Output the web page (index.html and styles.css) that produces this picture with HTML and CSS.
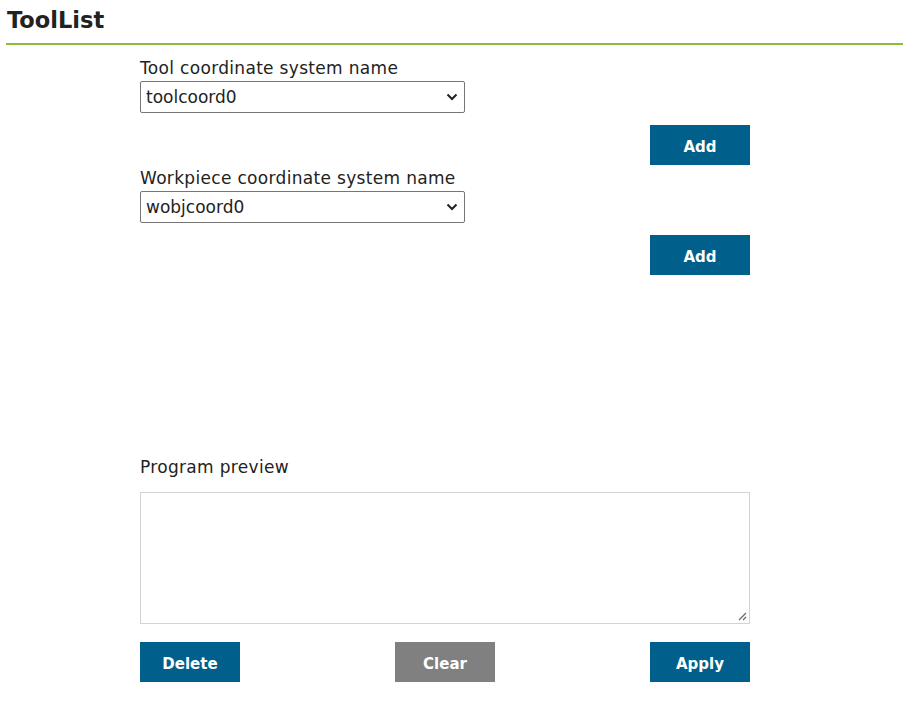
FILE: index.html
```html
<!DOCTYPE html>
<html>
<head>
<meta charset="utf-8">
<link rel="stylesheet" href="styles.css">
</head>
<body>
<div class="page">
  <h1 class="title">ToolList</h1>
  <div class="content">
    <div class="field">
      <label class="label">Tool coordinate system name</label>
      <div class="select">
        <span>toolcoord0</span>
        <svg class="chev" width="12" height="8" viewBox="0 0 12 8"><path d="M1.5 1.5 L6 6 L10.5 1.5" fill="none" stroke="#222" stroke-width="2"/></svg>
      </div>
    </div>
    <div class="btnrow"><button class="btn">Add</button></div>
    <div class="field second">
      <label class="label">Workpiece coordinate system name</label>
      <div class="select">
        <span>wobjcoord0</span>
        <svg class="chev" width="12" height="8" viewBox="0 0 12 8"><path d="M1.5 1.5 L6 6 L10.5 1.5" fill="none" stroke="#222" stroke-width="2"/></svg>
      </div>
    </div>
    <div class="btnrow"><button class="btn">Add</button></div>
    <div class="preview">
      <label class="label">Program preview</label>
      <div class="textarea">
        <svg class="grip" width="9" height="9" viewBox="0 0 9 9"><path d="M1 8 L8 1 M5 8 L8 5" stroke="#666" stroke-width="1.2"/></svg>
      </div>
    </div>
    <div class="actions">
      <button class="btn">Delete</button>
      <button class="btn gray">Clear</button>
      <button class="btn">Apply</button>
    </div>
  </div>
</div>
</body>
</html>
```
FILE: styles.css
```css
html, body { margin: 0; padding: 0; background: #fff; }
body { font-family: "DejaVu Sans", Verdana, sans-serif; color: #222; }
.page { padding: 6px 12px 0 6px; }
.title {
  margin: 0;
  padding: 0 0 8px 1px;
  font-size: 22.5px;
  font-weight: bold;
  line-height: 29px;
  color: #222;
  border-bottom: 2px solid #8dbb3a;
}
.content { width: 610px; margin-left: 134px; padding-top: 12px; }
.field { display: flex; flex-direction: column; }
.second { margin-top: 2px; }
.label { font-size: 17px; line-height: 22px; color: #222; letter-spacing: 0.32px; }
.select {
  margin-top: 2px;
  width: 325px;
  height: 32px;
  flex: none;
  box-sizing: border-box;
  border: 1px solid #767676;
  border-radius: 2px;
  display: flex;
  align-items: center;
  justify-content: space-between;
  padding: 0 6px 0 5px;
  font-size: 17px;
}
.btnrow { display: flex; justify-content: flex-end; margin-top: 12px; }
.btn {
  width: 100px;
  height: 40px;
  border: none;
  background: #005f8b;
  color: #fff;
  font-family: "DejaVu Sans", Verdana, sans-serif;
  font-weight: bold;
  font-size: 15px;
  padding: 3px 0 0 0;
}
.btn.gray { background: #808080; }
.preview { margin-top: 181px; display: flex; flex-direction: column; }
.textarea {
  margin-top: 14px;
  height: 132px;
  box-sizing: border-box;
  border: 1px solid #d3d3d3;
  position: relative;
}
.grip { position: absolute; right: 2px; bottom: 2px; }
.actions { display: flex; justify-content: space-between; margin-top: 18px; }
```
